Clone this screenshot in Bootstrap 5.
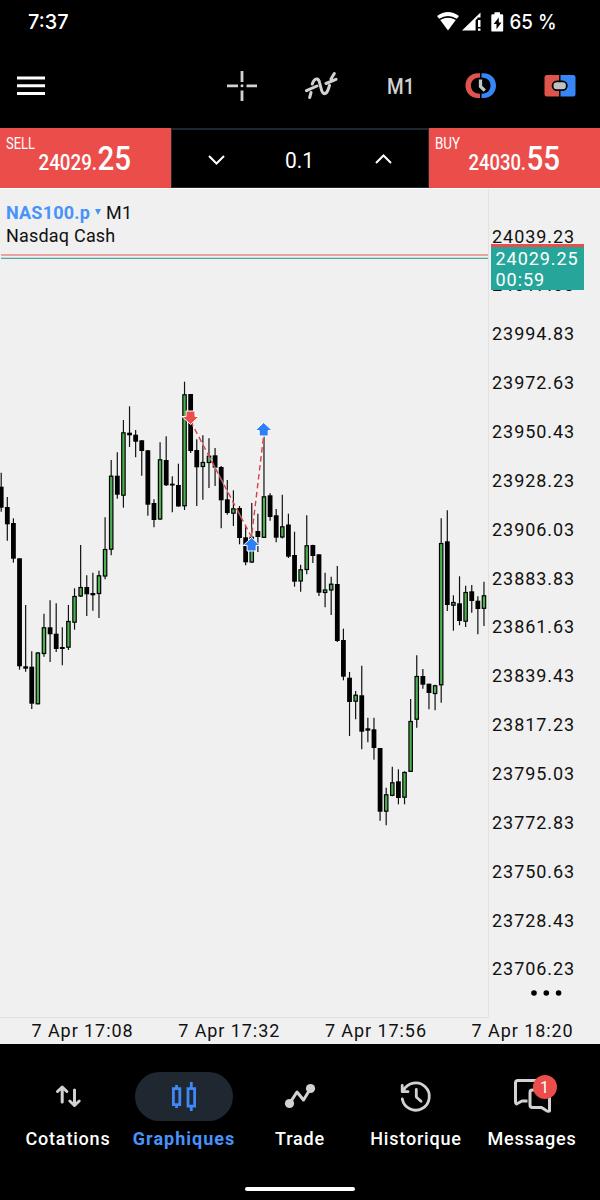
<!DOCTYPE html>
<html lang="fr">
<head>
<meta charset="utf-8">
<meta name="viewport" content="width=device-width, initial-scale=1">
<title>NAS100.p M1</title>
<link href="https://cdn.jsdelivr.net/npm/bootstrap@5.3.0/dist/css/bootstrap.min.css" rel="stylesheet">
<style>
body{font-family:Roboto,sans-serif;background:#000;color:#fff;width:600px;height:1200px;overflow:hidden}
svg{display:block}
.status{height:44px;padding:0 43px 0 28px}
.tools{height:84px;padding-left:17px}
.tool{width:79.5px}
.trade{height:61px;border-bottom:1px solid #fff}
.quote{background:#eb4d4b;flex:none}
.volume{border:1px solid #20282f;border-top-width:2px;flex:1}
.chart{height:855px;background:#f0f0f0;color:#111;font-size:18px;line-height:23px}
.plot{width:489px}
.caption{left:6px;top:12px;letter-spacing:.2px}
.sym{color:#4793fb;font-weight:700}
.axis{padding:22.5px 0 0 3px;letter-spacing:.95px}
.tick{height:48.87px;line-height:50px}
.tag{left:1.5px;top:55px;width:93.500px;height:46px;background:#26a69a;border-top:3px solid #eb4d4b;color:#fff;padding:1px 0 0 5px;line-height:21px}
.more{right:38px;bottom:48px}
.times{left:0;bottom:0;height:27px;width:600px;padding-left:31.500px;line-height:28px;letter-spacing:.93px;white-space:nowrap}
.times span{width:146.7px;flex:none}
.tabs{height:143px;padding:28px 10px 0}
.tab-item{width:116px;font-size:18px;font-weight:500;letter-spacing:.8px;line-height:23px;white-space:nowrap}
.pill{width:98px;height:49px;border-radius:25px;margin-bottom:6px}
.active-tab{color:#4793fb;font-weight:700;letter-spacing:1px}
.active-tab .pill{background:#1f2731}
.count{left:49.500px;top:3px;width:24px;height:24px;background:#eb4d4b;font-weight:400;font-size:16px;letter-spacing:0}
.homebar{width:110px;height:3.5px;border-radius:2px;background:#fff}
</style>
</head>
<body>
<header class="status d-flex justify-content-between">
  <svg width="48" height="44"><text x="0" y="29" textLength="40.5" lengthAdjust="spacingAndGlyphs" font-family="Inter" font-weight="500" font-size="20" fill="#fff">7:37</text></svg>
  <svg width="122" height="44" viewBox="435 0 122 44" fill="#fff">
    <path d="M437 16Q448 8 459 16L456.800 18.800Q448 13 439.200 18.800Z"/><path d="M440.200 20Q448 15.500 455.800 20L448 30.600Z"/>
    <path d="M462 30.600L480.500 12.500V17.500H477.500V18.500L475.600 20V30.600Z"/><path d="M478 20h2.500v7H478zM478 28.500h2.500v2.200H478z"/>
    <path fill-rule="evenodd" d="M494.500 12.300h5.500v1.900h2q1.200 0 1.200 1.200v15q0 1.200-1.200 1.200h-9.500q-1.200 0-1.200-1.200v-15q0-1.200 1.200-1.200h2zM498.800 17.500L493.700 24h2.800v5.300l5-6.800h-2.700z"/>
    <text x="509.500" y="29" textLength="47" lengthAdjust="spacingAndGlyphs" font-family="Inter" font-weight="500" font-size="20">65 %</text>
  </svg>
</header>
<nav class="tools d-flex align-items-center">
  <svg width="28" height="20" stroke="#fff" stroke-width="3"><path d="M0 2H28M0 9.700H28M0 17.400H28"/></svg>
  <div class="d-flex ms-auto align-items-center">
    <div class="tool"><svg class="mx-auto" width="32" height="32" stroke="#d2d2d2" stroke-width="2.800"><path d="M16 1V12M16 20.500V31M1 15.800H12M20.500 15.800H31"/><circle cx="16" cy="15.800" r="1.500" fill="#d2d2d2" stroke="none"/></svg></div>
    <div class="tool"><svg class="mx-auto" width="34" height="32" viewBox="304.500 70 34 32" fill="none" stroke="#d2d2d2" stroke-width="3" stroke-linecap="round"><path d="M306 90.600L316.500 86M325.500 83.500L335.500 79.300M309.200 97.500L310.500 92.500M311.800 84C314 77.500 318.200 77.500 319.200 83L321 90C322.500 95.500 326.300 94.500 328 88.500L329 85.500M330.500 79L333.800 73.500"/></svg></div>
    <div class="tool"><svg class="mx-auto" width="36" height="30"><text x="4" y="22.500" textLength="27.500" lengthAdjust="spacingAndGlyphs" font-family="Roboto" font-weight="500" font-size="22.500" fill="#d2d2d2">M1</text></svg></div>
    <div class="tool"><svg class="mx-auto" width="32" height="28" viewBox="465 72 32 28"><path d="M480 73.200h-2C470 73.200 465.500 79 465.500 85.600S470 98 478 98h2v-4.200C473.500 93.500 471 90 471 85.600S473.500 77.600 480 77.400Z" fill="#df554d"/><path d="M481.500 73.200h2C491.500 73.200 496 79 496 85.600S491.500 98 483.500 98h-2v-4.200C488 93.500 490.500 90 490.500 85.600S488 77.600 481.500 77.400Z" fill="#3686f7"/><path d="M480.500 79.500V86.500L484.800 90.600" fill="none" stroke="#c2c7c9" stroke-width="3.300"/></svg></div>
    <div class="tool"><svg class="mx-auto" width="32" height="24" viewBox="544.500 74 32 24"><path d="M559.600 75H547.500q-2.500 0-2.500 2.500V94q0 2.500 2.500 2.500H559.600Z" fill="#df554d"/><path d="M561 75h12.500q2.500 0 2.500 2.500V94q0 2.500-2.500 2.500H561Z" fill="#3686f7"/><rect x="552.200" y="80.500" width="16" height="10.500" rx="5.200"/><rect x="554" y="82.300" width="12.400" height="7" rx="3.200" fill="#bec2c3"/></svg></div>
  </div>
</nav>
<section class="trade d-flex">
  <div class="quote"><svg width="171" height="60" fill="#fff" font-family="Roboto"><text x="6" y="20.500" textLength="29" lengthAdjust="spacingAndGlyphs" font-size="16">SELL</text><text x="38.500" y="41.500" textLength="58.500" lengthAdjust="spacingAndGlyphs" font-size="21.500" font-weight="500">24029.</text><text x="97.500" y="41.500" textLength="33.500" lengthAdjust="spacingAndGlyphs" font-size="33.500" font-weight="500">25</text></svg></div>
  <div class="volume d-flex align-items-center justify-content-between">
    <svg width="86" height="56" fill="none" stroke="#fff" stroke-width="2"><path d="M37 25L44.500 32.500L52 25"/></svg>
    <svg width="32" height="56"><text x="1" y="36.500" textLength="29" lengthAdjust="spacingAndGlyphs" font-family="Roboto" font-size="22" fill="#fff">0.1</text></svg>
    <svg width="86" height="56" fill="none" stroke="#fff" stroke-width="2"><path d="M34 32L41.500 24.500L49 32"/></svg>
  </div>
  <div class="quote"><svg width="171" height="60" fill="#fff" font-family="Roboto"><text x="6" y="20.500" textLength="25" lengthAdjust="spacingAndGlyphs" font-size="16">BUY</text><text x="39.500" y="41.500" textLength="57.500" lengthAdjust="spacingAndGlyphs" font-size="21.500" font-weight="500">24030.</text><text x="97.500" y="41.500" textLength="33.500" lengthAdjust="spacingAndGlyphs" font-size="33.500" font-weight="500">55</text></svg></div>
</section>
<main class="chart d-flex position-relative">
  <div class="plot">
    <svg id="plot" width="489" height="829" viewBox="0 189 489 829"></svg>
    <div class="caption position-absolute"><span class="sym">NAS100.p</span><svg class="d-inline-block mx-1" style="vertical-align:3px" width="8" height="7"><path d="M1 0H7L4 6Z" fill="#4793fb"/></svg><span>M1</span><br>Nasdaq Cash</div>
  </div>
  <div class="axis position-relative"><div id="ticks"></div><div class="tag position-absolute">24029.25<br>00:59</div></div>
  <svg class="more position-absolute" width="31" height="6" fill="#000"><circle cx="3" cy="3" r="2.800"/><circle cx="15.300" cy="3" r="2.800"/><circle cx="27.600" cy="3" r="2.800"/></svg>
  <div class="times position-absolute d-flex"><span>7 Apr 17:08</span><span>7 Apr 17:32</span><span>7 Apr 17:56</span><span>7 Apr 18:20</span></div>
</main>
<footer>
  <div class="tabs d-flex text-center">
    <div class="tab-item"><div class="pill mx-auto"><svg width="98" height="49" viewBox="18.500 1072 98 49" fill="none" stroke="#d2d2d2" stroke-width="3" stroke-linecap="round" stroke-linejoin="round"><path d="M61.700 1102V1087M57 1091.500L61.700 1087L66.400 1091.500M74 1090V1105.500M69.300 1101L74 1105.500L78.700 1101"/></svg></div>Cotations</div>
    <div class="tab-item active-tab"><div class="pill mx-auto"><svg width="98" height="49" viewBox="135 1072 98 49" fill="none" stroke="#4087f8" stroke-width="2.800"><path d="M173.400 1088.700h6.400v16h-6.400zM176.600 1085v3M176.600 1105v3M188 1088.700h6.600v17.500H188zM191.300 1082v6.500M191.300 1106v5"/></svg></div>Graphiques</div>
    <div class="tab-item"><div class="pill mx-auto"><svg width="98" height="49" viewBox="251 1072 98 49" fill="#d2d2d2" stroke="#d2d2d2"><path d="M289.500 1103.500L297 1092L303.500 1100L310.500 1088.500" fill="none" stroke-width="3" stroke-linejoin="round"/><g stroke="none"><circle cx="289.500" cy="1103.500" r="4.600"/><circle cx="310.500" cy="1088.500" r="4.600"/></g></svg></div>Trade</div>
    <div class="tab-item"><div class="pill mx-auto"><svg width="98" height="49" viewBox="367 1072 98 49" fill="none" stroke="#d2d2d2" stroke-width="2.800" stroke-linecap="round" stroke-linejoin="round"><path d="M403.500 1090.500A13.600 13.600 0 1 1 402.300 1099M402.200 1085.300V1091.700H408M416.300 1089.500V1097L421 1101.200"/></svg></div>Historique</div>
    <div class="tab-item"><div class="pill mx-auto position-relative"><svg width="98" height="49" viewBox="483 1072 98 49" fill="none" stroke="#d2d2d2" stroke-width="3" stroke-linejoin="round"><path d="M527.500 1101H522L516.500 1104Q515.500 1103.500 515.500 1102V1083Q515.500 1080.500 518 1080.500H537Q539.500 1080.500 539.500 1083V1089M532.500 1090H546.500Q549.500 1090 549.500 1093V1111Q547.500 1112 545.500 1110L541.500 1107.500H532.500Q530 1107.500 530 1105V1092.500Q530 1090 532.500 1090Z"/></svg><span class="count position-absolute rounded-circle d-flex align-items-center justify-content-center">1</span></div>Messages</div>
  </div>
  <div class="homebar mx-auto"></div>
</footer>
<script src="https://cdn.jsdelivr.net/npm/bootstrap@5.3.0/dist/js/bootstrap.bundle.min.js"></script>
<script>
// high, body top, body bottom, low, rising
const candles=[
[472.7,486.7,507.7,511.7],[497,507,524.3,540.7],[518.3,523,558.7,562.7],[558.3,558.3,666.3,669.7],[605,666.3,668.7,671.7],
[651.3,666.7,703.7,709],[652,652.5,704.3,704.3,1],[613.7,627.3,654,656.7,1],[600.3,627.3,634.3,662],[603.3,633.7,649,652],
[627.3,647,649,665.3],[605,621,647.7,650,1],[588.3,596,622.7,629.7,1],[545,587,596.5,597,1],[575.3,587,594.3,616],
[572.7,593,595.3,610.7],[570.7,575.3,594,618,1],[517.2,549,576.5,579.2,1],[460,475.7,549.7,555.3,1],[452.3,475.7,494.7,498.7],
[420,432.3,495.7,507.7,1],[406.3,432.7,435.3,447],[430,434.7,441.7,457.3],[440,440.3,451,475.7],[450,450.3,504.7,515.7],
[499.3,503,520,527.3],[442.3,459.3,519.5,520,1],[436.3,460,485.3,486],[476.3,483.7,485.5,512.3],[463.7,485,506.5,506.7],
[381.7,394.3,506.3,510,1],[394,394,451,453],[439.3,450,467.3,506],[435.3,462,467,499.7,1],[438.3,455.7,463,488,1],
[448,455.3,467.7,486],[466,467,500.3,528.3],[480,499.3,513,514.7],[490.3,508.3,513.7,526,1],[506,508,538,544.3],
[526.7,537.3,562.3,565.3],[503,536.7,562.5,563,1],[513.7,531,537,552],[430,496.3,537.8,538,1],[493.3,495.3,517,520.7],
[509,515.3,537.7,542.3],[494.7,526.3,537.5,538.5,1],[513.7,524.5,556.7,558],[531.7,555,581.7,586.7],[564.7,569.3,581.5,591.7,1],
[515.3,545.3,570,574.3,1],[544.7,545,556,563],[554.3,554.3,592.7,596],[572.7,589.5,593,607.3,1],[576.7,583.7,590.5,615,1],
[566,584,641,642],[628.7,640,676.7,680.3],[672,677.7,702,736],[691,694.7,701.7,719.3,1],[665.7,695.3,731.7,749.3],
[717.7,728.3,730.7,742.3],[717.7,729.3,748,759.7],[748,748,811.7,820.7],[787.7,794.3,811.7,825.3,1],[766.7,782.3,795.8,796.3,1],
[769.3,781.3,798,804.3],[771.3,772,797.7,804.3,1],[699,721,771.8,772,1],[655.3,676,719.7,727.7,1],[669,676,684.7,688.7],
[683.7,683.7,693,709.3],[684.7,685.3,694,710.3,1],[518.3,543,685.3,702.7,1],[510.3,541.3,605,611],[595.3,602,605.7,630.7,1],
[576.3,603.3,621,625.3],[585.7,592,621.7,627,1],[585,591.3,601,612.7],[596.3,600.7,609,634.3],[581.7,595.3,608.8,626,1]];
let s='<path d="M488.5 189V1017.500H0" fill="none" stroke="#e2e2e2"/><path d="M1 255H488" stroke="#e78888" stroke-width="1.600"/><path d="M1 258.300H488" stroke="#4fa79a" stroke-width="1.300"/>';
candles.forEach(([h,t,b,l,up],i)=>{
  const x=1.2+6.111*i;
  s+=`<path d="M${x} ${h}V${l}" stroke="#111" stroke-width="1.200"/>`;
  s+=up?`<rect x="${x-1.7}" y="${t+.5}" width="3.400" height="${b-t-1}" fill="#4caf50" stroke="#000" stroke-width="1.200"/>`
       :`<rect x="${x-2.4}" y="${t}" width="4.800" height="${b-t}"/>`;
});
s+='<path d="M190.500 421L251.500 537L263.700 435" fill="none" stroke="#fff" stroke-width="1.600" opacity=".45"/><path d="M190.500 421L251.500 537L263.700 435" fill="none" stroke="#dc3e44" stroke-width="1.400" stroke-dasharray="5.500 3.500"/>';
const arrow='M0-7.500L8.500 .5H4.500V6H-4.500V.5H-8.500Z';
s+=`<path transform="translate(190.500 417) rotate(180)" d="${arrow}" fill="#eb4d4b" stroke="#fff" stroke-width="1"/>`;
[[251.600,545],[263.700,430]].forEach(p=>s+=`<path transform="translate(${p})" d="${arrow}" fill="#2f80f7" stroke="#fff" stroke-width="1"/>`);
document.getElementById('plot').innerHTML=s;
let ticks='';
for(let i=0;i<16;i++) ticks+=`<div class="tick">${(24039.23-22.2*i).toFixed(2)}</div>`;
document.getElementById('ticks').innerHTML=ticks;
</script>
</body>
</html>
